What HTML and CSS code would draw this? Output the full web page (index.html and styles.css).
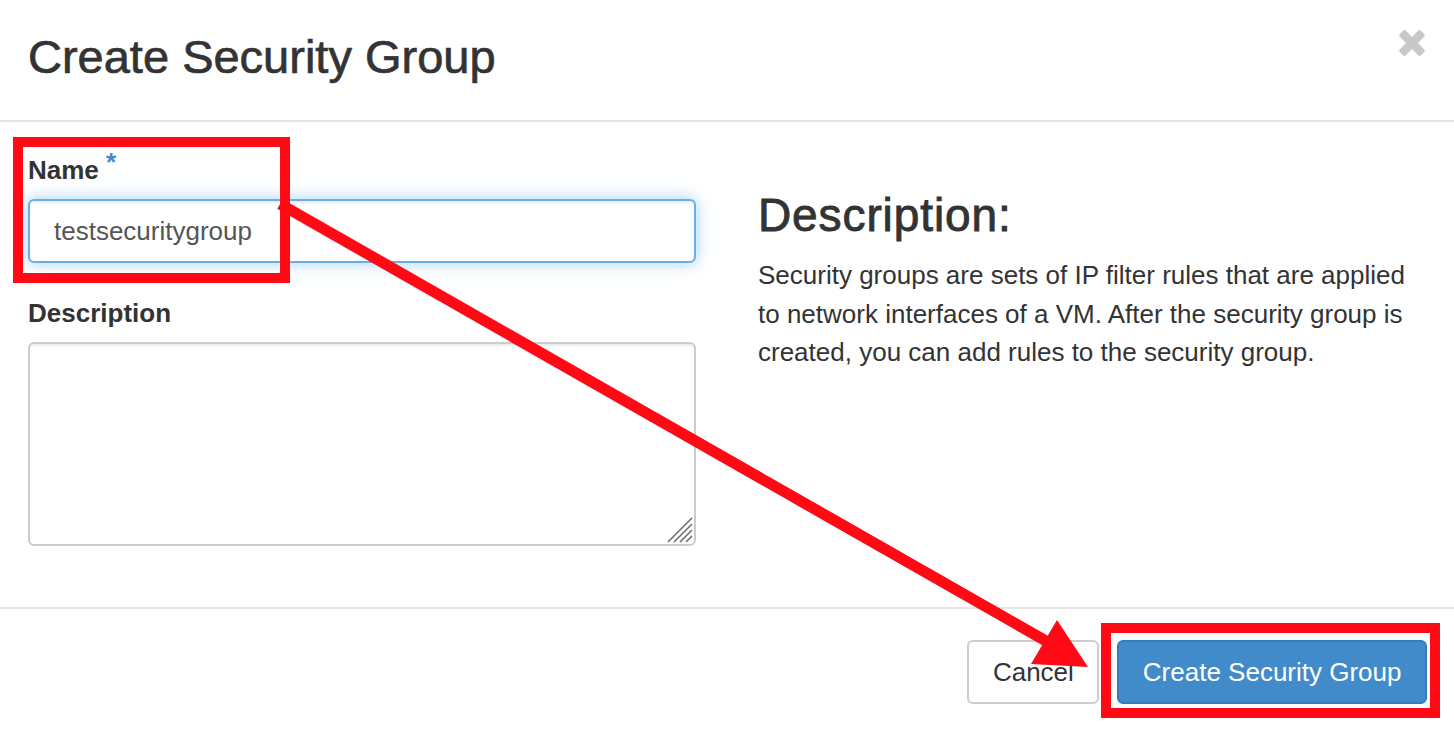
FILE: index.html
```html
<!DOCTYPE html>
<html lang="en">
<head>
<meta charset="utf-8">
<title>Create Security Group</title>
<link rel="stylesheet" href="styles.css">
</head>
<body>
<div class="modal">
  <div class="modal-header">
    <h3 class="modal-title">Create Security Group</h3>
    <button class="close" type="button" aria-label="Close">
      <svg width="28" height="28" viewBox="0 0 28 28">
        <rect x="-4.25" y="-15" width="8.5" height="30" rx="2" transform="translate(14 14) rotate(45)" fill="#c8c8c8"/>
        <rect x="-4.25" y="-15" width="8.5" height="30" rx="2" transform="translate(14 14) rotate(-45)" fill="#c8c8c8"/>
      </svg>
    </button>
  </div>
  <div class="modal-body">
    <div class="col">
      <div class="form-group">
        <label class="control-label">Name <span class="req">*</span></label>
        <input class="form-control input-focus" type="text" value="testsecuritygroup">
      </div>
      <div class="form-group">
        <label class="control-label">Description</label>
        <div class="textarea-wrap">
          <textarea class="form-control textarea"></textarea>
          <svg class="grip" width="26" height="26" viewBox="0 0 26 26">
            <path d="M1 25 L25 1 M7 25 L25 7 M13 25 L25 13 M19 25 L25 19" stroke="#6f6f6f" stroke-width="1.6" fill="none"/>
          </svg>
        </div>
      </div>
    </div>
    <div class="col">
      <h3 class="desc-title">Description:</h3>
      <p class="desc-text">Security groups are sets of IP filter rules that are applied to network interfaces of a VM. After the security group is created, you can add rules to the security group.</p>
    </div>
  </div>
  <div class="modal-footer">
    <button class="btn btn-default" type="button">Cancel</button>
    <button class="btn btn-primary" type="button">Create Security Group</button>
  </div>
  <svg class="annotations" width="1454" height="732" viewBox="0 0 1454 732">
    <rect x="18" y="142" width="267" height="136" fill="none" stroke="#ff0a14" stroke-width="10"/>
    <rect x="1106" y="628" width="329" height="85" fill="none" stroke="#ff0a14" stroke-width="10"/>
    <line x1="280" y1="204" x2="1046" y2="641" stroke="#ff0a14" stroke-width="11"/>
    <polygon points="1088,667 1057,620 1031,664" fill="#ff0a14"/>
  </svg>
</div>
</body>
</html>
```
FILE: styles.css
```css
* {
  box-sizing: border-box;
}

html, body {
  margin: 0;
  padding: 0;
  background: #fff;
}

body {
  font-family: "Liberation Sans", Arial, Helvetica, sans-serif;
  color: #333;
}

.modal {
  position: relative;
  width: 1454px;
  height: 732px;
  overflow: hidden;
  background: #fff;
}

.modal-header {
  display: flex;
  justify-content: space-between;
  align-items: flex-start;
  height: 122px;
  padding: 31px 28px 0 28px;
  border-bottom: 2px solid #e5e5e5;
}

.modal-title {
  margin: 0;
  font-size: 47px;
  line-height: 52px;
  font-weight: normal;
  color: #333;
  -webkit-text-stroke: 0.7px #333;
}

.close {
  margin-top: -2px;
  padding: 0;
  border: 0;
  background: none;
  width: 28px;
  height: 28px;
  display: block;
}

.close svg {
  display: block;
}

.modal-body {
  display: grid;
  grid-template-columns: 668px 668px;
  column-gap: 62px;
  height: 485px;
  padding: 30px 28px 0 28px;
}

.form-group {
  margin-bottom: 32px;
}

.control-label {
  display: block;
  font-size: 26px;
  line-height: 37px;
  font-weight: bold;
  margin-bottom: 10px;
  color: #333;
}

.req {
  font-weight: bold;
  color: #428bca;
  line-height: 0;
  vertical-align: 8px;
}

.form-control {
  display: block;
  width: 100%;
  font-family: "Liberation Sans", Arial, Helvetica, sans-serif;
  font-size: 26px;
  color: #555;
  background: #fff;
  border: 2px solid #ccc;
  border-radius: 6px;
  box-shadow: inset 0 2px 2px rgba(0, 0, 0, 0.075);
  outline: none;
}

.input-focus {
  height: 64px;
  padding: 0 24px;
  border-color: #66afe9;
  box-shadow: inset 0 2px 2px rgba(0, 0, 0, 0.075), 0 0 16px rgba(102, 175, 233, 0.6);
}

.textarea-wrap {
  position: relative;
}

.textarea {
  height: 204px;
  resize: none;
  padding: 12px 24px;
}

.grip {
  position: absolute;
  right: 3px;
  bottom: 3px;
}

.desc-title {
  margin: 38px 0 0 0;
  font-size: 46px;
  line-height: 51px;
  font-weight: normal;
  letter-spacing: 0.9px;
  color: #333;
  -webkit-text-stroke: 0.9px #333;
}

.desc-text {
  margin: 15px 0 0 0;
  font-size: 26px;
  line-height: 38.5px;
  color: #333;
}

.modal-footer {
  display: flex;
  justify-content: flex-end;
  align-items: flex-start;
  gap: 18px;
  height: 125px;
  padding: 31px 27px 0 28px;
  border-top: 2px solid #e5e5e5;
}

.btn {
  display: flex;
  align-items: center;
  justify-content: center;
  height: 64px;
  padding: 0 23.5px;
  font-family: "Liberation Sans", Arial, Helvetica, sans-serif;
  font-size: 26px;
  border: 2px solid #ccc;
  border-radius: 6px;
  cursor: pointer;
}

.btn-default {
  background: #fff;
  color: #333;
  border-color: #ccc;
}

.btn-primary {
  background: #428bca;
  color: #fff;
  border-color: #357ebd;
}

.annotations {
  position: absolute;
  top: 0;
  left: 0;
  pointer-events: none;
}
```
